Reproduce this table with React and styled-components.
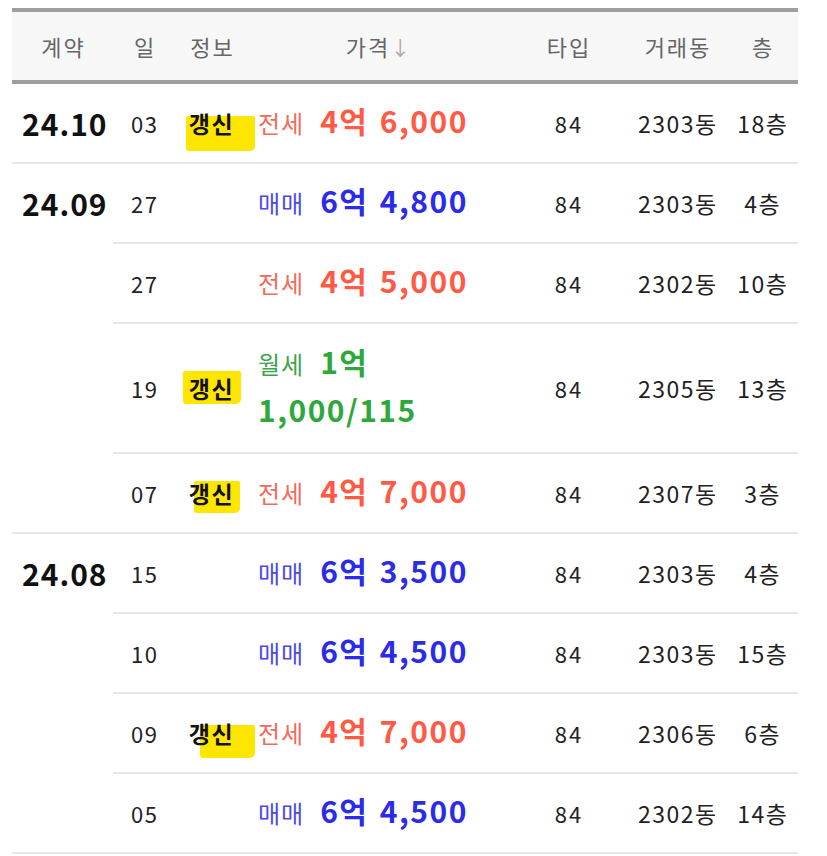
import styled, { createGlobalStyle } from "styled-components";

const GlobalStyle = createGlobalStyle`
  body {
    margin: 0;
    background: #fff;
    font-family: "Noto Sans CJK KR", "Noto Sans", sans-serif;
    color: #222;
  }
`;

const Page = styled.div`
  padding: 8px 29px 0 12px;
`;

const Table = styled.table`
  width: 786px;
  border-collapse: collapse;
  table-layout: fixed;
`;

const Head = styled.th`
  height: 68px;
  padding: 0;
  background: #f7f7f7;
  border-top: 4px solid #9e9e9e;
  border-bottom: 4px solid #9e9e9e;
  font-size: 22px;
  font-weight: 400;
  color: #666;
  text-align: center;
  white-space: nowrap;
  letter-spacing: 2px;
  text-indent: 2px;
`;

const Arrow = styled.span`
  color: #aaa;
  font-size: 20px;
`;

const Cell = styled.td`
  padding: ${(p) => (p.$tall ? 16 : 15)}px 0;
  line-height: 48px;
  font-size: ${(p) => p.$size || 22}px;
  color: #222;
  white-space: nowrap;
  letter-spacing: ${(p) => p.$ls ?? 1.5}px;
  text-indent: ${(p) => p.$ls ?? 1.5}px;
  text-align: ${(p) => p.$align || "center"};
  vertical-align: ${(p) => p.$valign || "middle"};
  border-bottom: 2px solid #e6e6e6;
`;

const Month = styled(Cell)`
  padding-left: 10px;
  font-size: 30px;
  font-weight: 700;
  color: #111;
  text-indent: 0;
`;

const Price = styled(Cell)`
  padding-left: 10px;
  padding-right: 10px;
  text-align: left;
  text-indent: 0;
  letter-spacing: 0;
  white-space: normal;
`;

const Label = styled.span`
  line-height: 1;
  font-size: 24px;
  letter-spacing: 1px;
  margin-right: 16px;
  color: ${(p) => p.$color};
`;

const Amount = styled.span`
  line-height: 1;
  font-size: 30px;
  font-weight: 700;
  letter-spacing: 1.5px;
  word-spacing: 3px;
  color: ${(p) => p.$color};
`;

const Tag = styled.span`
  position: relative;
  z-index: 0;
  display: inline-block;
  line-height: 26px;
  font-size: 23px;
  font-weight: 700;
  letter-spacing: 1.5px;
  color: #111;

  &::before {
    content: "";
    position: absolute;
    z-index: -1;
    left: ${(p) => p.$x}px;
    top: ${(p) => p.$y}px;
    width: ${(p) => p.$w}px;
    height: ${(p) => p.$h}px;
    background: #ffe600;
    border-radius: 2px 2px 5px 3px;
  }
`;

const kinds = {
  전세: { label: "#f26b5b", amount: "#ff5a45" },
  매매: { label: "#4a4ae8", amount: "#2b2bea" },
  월세: { label: "#3ca44a", amount: "#2ea83c" },
};

const groups = [
  {
    month: "24.10",
    items: [
      { day: "03", mark: [-3, 6, 69, 35], kind: "전세", amount: "4억 6,000", dong: "2303동", floor: "18층" },
    ],
  },
  {
    month: "24.09",
    items: [
      { day: "27", kind: "매매", amount: "6억 4,800", dong: "2303동", floor: "4층" },
      { day: "27", kind: "전세", amount: "4억 5,000", dong: "2302동", floor: "10층" },
      { day: "19", mark: [-6, -4, 58, 33], kind: "월세", amount: "1억 1,000/115", dong: "2305동", floor: "13층", tall: true },
      { day: "07", mark: [5, 1, 46, 32], kind: "전세", amount: "4억 7,000", dong: "2307동", floor: "3층" },
    ],
  },
  {
    month: "24.08",
    items: [
      { day: "15", kind: "매매", amount: "6억 3,500", dong: "2303동", floor: "4층" },
      { day: "10", kind: "매매", amount: "6억 4,500", dong: "2303동", floor: "15층" },
      { day: "09", mark: [11, 5, 55, 33], kind: "전세", amount: "4억 7,000", dong: "2306동", floor: "6층" },
      { day: "05", kind: "매매", amount: "6억 4,500", dong: "2302동", floor: "14층" },
    ],
  },
];

const App = () => {
  return (
    <Page>
      <GlobalStyle />
      <Table>
        <colgroup>
          <col style={{ width: 101 }} />
          <col style={{ width: 62 }} />
          <col style={{ width: 73 }} />
          <col style={{ width: 260 }} />
          <col style={{ width: 120 }} />
          <col style={{ width: 98 }} />
          <col style={{ width: 72 }} />
        </colgroup>
        <thead>
          <tr>
            <Head>계약</Head>
            <Head>일</Head>
            <Head>정보</Head>
            <Head>
              가격<Arrow>↓</Arrow>
            </Head>
            <Head>타입</Head>
            <Head>거래동</Head>
            <Head>층</Head>
          </tr>
        </thead>
        <tbody>
          {groups.map((g) =>
            g.items.map((it, i) => (
              <tr key={g.month + i}>
                {i === 0 && (
                  <Month rowSpan={g.items.length} $align="left" $valign="top" $ls={1}>
                    {g.month}
                  </Month>
                )}
                <Cell>{it.day}</Cell>
                <Cell $ls={0}>
                  {it.mark && (
                    <Tag $x={it.mark[0]} $y={it.mark[1]} $w={it.mark[2]} $h={it.mark[3]}>
                      갱신
                    </Tag>
                  )}
                </Cell>
                <Price $tall={it.tall}>
                  <Label $color={kinds[it.kind].label}>{it.kind}</Label>
                  <Amount $color={kinds[it.kind].amount}>{it.amount}</Amount>
                </Price>
                <Cell $ls={2}>84</Cell>
                <Cell $ls={1.5} $size={23}>{it.dong}</Cell>
                <Cell $ls={1.5} $size={23}>{it.floor}</Cell>
              </tr>
            ))
          )}
        </tbody>
      </Table>
    </Page>
  );
};

export default App;
